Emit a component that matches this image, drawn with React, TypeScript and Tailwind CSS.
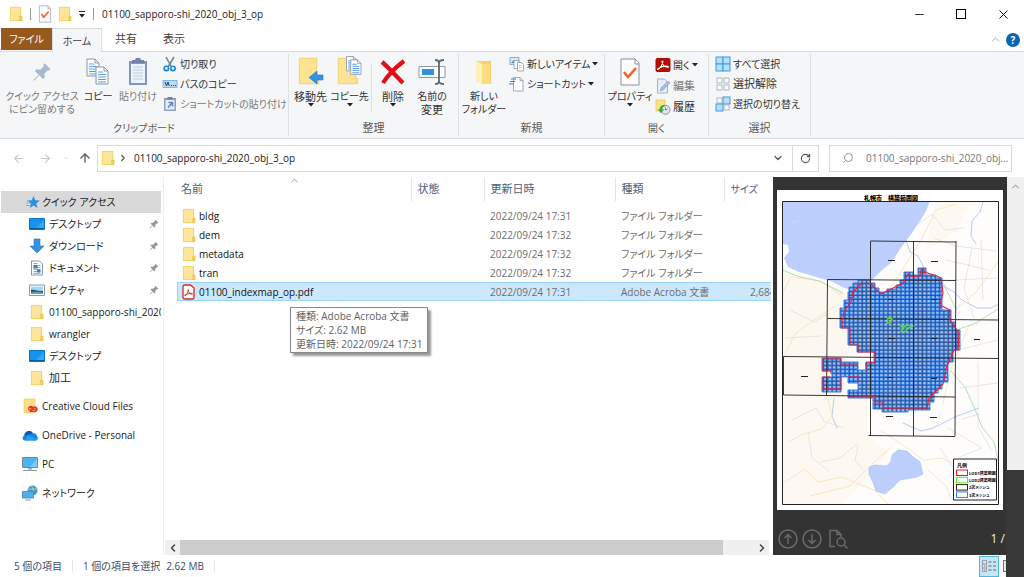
import React from "react";
import { ArrowLeft, ArrowRight, ArrowUp, ChevronDown, ChevronLeft, ChevronRight, ChevronUp, Minus, RotateCw, Search, Square, X } from "lucide-react";

type IconProps = { className?: string };

const FolderIcon = ({ className = "h-4 w-4" }: IconProps) => (
  <svg viewBox="0 0 16 16" className={className} aria-hidden="true">
    <path d="M2 1h11v9h1.200v5H2z" fill="#fbe08a" />
    <path d="M2.400 1.400h10.200v9H12v4.200H2.400z" fill="#fde59a" stroke="#f0cb5c" strokeWidth=".7" />
    <path d="M12 10.200h1.800v4.400H12z" fill="#fbe08a" stroke="#e6b935" strokeWidth=".8" />
  </svg>
);

const BigFolder = () => (
  <>
    <path d="M4 2h18v20h2v6H4z" fill="#fbdd83" />
    <path d="M4 2h17v26H4z" fill="#fde394" />
    <path d="M4.300 2.300h17.400v20h2v5.400H4.300z" fill="none" stroke="#efcd69" strokeWidth=".7" />
  </>
);

const Sheet = ({ x, y }: { x: number; y: number }) => (
  <g transform={`translate(${x} ${y})`}>
    <path d="M0 0h8l4 4v13H0z" fill="#fff" stroke="#8b97a8" />
    <path d="M8 0v4h4" fill="none" stroke="#8b97a8" />
    <path d="M2 5h5M2 7.500h8M2 10h8M2 12.500h8M2 15h8" stroke="#5b9fe6" strokeWidth="1.200" />
  </g>
);

const CopyIcon = () => (
  <svg viewBox="0 0 32 32" className="h-8 w-8"><Sheet x={5} y={3} /><Sheet x={14} y={11} /></svg>
);

const PushPin = ({ className = "h-3 w-3 text-[#8f9aa5]" }: IconProps) => (
  <svg viewBox="0 0 16 16" className={className} aria-hidden="true">
    <path d="M10 1l5 5-1.600.800-.8-.2-2.700 2.800.3 3-1.400 1.200-3-3L1.600 15 1 14.400l4.300-4.300-3-3 1.300-1.300 3 .3 2.800-2.800-.2-.9z" fill="currentColor" />
  </svg>
);

const PasteIcon = () => (
  <svg viewBox="0 0 32 32" className="h-8 w-8">
    <path d="M7 5h18v24H7z" fill="#8097bd" />
    <path d="M9 8h14v19H9z" fill="#edf2f9" />
    <path d="M10 7V4h3l1-2h4l1 2h3v3z" fill="#7186a8" />
    <path d="M11 11h10M11 14h10M11 17h10M11 20h10M11 23h10" stroke="#bdcde5" />
  </svg>
);

const ScissorsIcon = () => (
  <svg viewBox="0 0 16 16" className="h-4 w-4" fill="none">
    <path d="M4 1l5.500 10M12 1L6 11" stroke="#71808f" strokeWidth="1.500" />
    <circle cx="4.400" cy="12.400" r="2.200" stroke="#1686d0" strokeWidth="1.600" />
    <circle cx="11" cy="12.400" r="2.200" stroke="#1686d0" strokeWidth="1.600" />
  </svg>
);

const PathIcon = () => (
  <svg viewBox="0 0 16 16" className="h-4 w-4">
    <path d="M1 4.500h14v7H1z" fill="#b9dcf4" stroke="#6ba9d6" strokeWidth=".8" />
    <path d="M3 6l1.500 4L6 6l1.300 4M9 9.500h1M11 9.500h1M13 9.500h1" fill="none" stroke="#245" strokeWidth="1" />
  </svg>
);

const PasteShortcutIcon = () => (
  <svg viewBox="0 0 16 16" className="h-4 w-4">
    <path d="M2 2h12v13H2z" fill="#8fa2bd" /><path d="M3.500 4h9v9.500h-9z" fill="#e8eef7" /><path d="M5.500 1h5v2.500h-5z" fill="#74869f" />
    <path d="M6.500 6.500h4V10.500M10.300 6.800L6 11.500" fill="none" stroke="#6485b9" strokeWidth="1.500" />
  </svg>
);

const MoveToIcon = () => (
  <svg viewBox="0 0 32 32" className="h-8 w-8"><BigFolder /><path d="M28 19v5h-6v4l-8-6.500 8-6.500v4z" fill="#2f92e3" stroke="#1f7fce" strokeWidth=".6" /></svg>
);

const CopyToIcon = () => (
  <svg viewBox="0 0 32 32" className="h-8 w-8"><BigFolder /><g transform="translate(12.500 .5) scale(.85)"><Sheet x={0} y={0} /><Sheet x={5} y={4} /></g></svg>
);

const DeleteIcon = () => (
  <svg viewBox="0 0 32 32" className="h-8 w-8"><path d="M5 6c5 4 13 13 21 21M27 5C19 11 11 19 6 27" fill="none" stroke="#e10f16" strokeWidth="4.200" /></svg>
);

const RenameIcon = () => (
  <svg viewBox="0 0 32 32" className="h-8 w-8" fill="none">
    <path d="M3 10.500h26v11H3z" fill="#fff" stroke="#8a97a5" /><path d="M6 13h12v6H6z" fill="#2f92e3" />
    <path d="M19 4c3 0 4 1 4 3v18c0 2-1 3-4 3M28 4c-3 0-5 1-5 3v18c0 2 2 3 5 3" stroke="#5f6b76" strokeWidth="1.800" />
  </svg>
);

const NewFolderIcon = () => (
  <svg viewBox="0 0 32 32" className="h-8 w-8">
    <path d="M8 5h15v21H8z" fill="#f6d06a" /><path d="M8 5l6 3v20l-6-3z" fill="#fff0b8" /><path d="M14 8h8v18h2l-1 2h-9z" fill="#fbdc83" />
  </svg>
);

const NewItemIcon = () => (
  <svg viewBox="0 0 16 16" className="h-4 w-4">
    <path d="M1 1.500h9v7H1z" fill="#cfe8fb" stroke="#68a5d2" strokeWidth=".8" /><path d="M2 7l3-3 3 3z" fill="#3e89c5" />
    <path d="M5 4.500h5v8H5z" fill="#fff" stroke="#8a97a5" strokeWidth=".8" /><path d="M8.500 6.500h4l2 2v6.500h-6z" fill="#fff" stroke="#8a97a5" strokeWidth=".8" />
    <path d="M10 9.500h3M10 11.500h3" stroke="#b3bdc8" strokeWidth=".8" />
  </svg>
);

const ShortcutIcon = () => (
  <svg viewBox="0 0 16 16" className="h-4 w-4">
    <path d="M4.500 1.500h6.500l3 3v10.500H4.500z" fill="#fff" stroke="#8a97a5" strokeWidth=".8" /><path d="M11 1.500v3h3" fill="none" stroke="#8a97a5" strokeWidth=".8" />
    <path d="M2 3h5M1 5.500h5M0 8h5" stroke="#2f86cc" strokeWidth="1.200" />
  </svg>
);

const CheckSheet = ({ className = "h-8 w-8" }: IconProps) => (
  <svg viewBox="0 0 32 32" className={className}>
    <path d="M7 3h14l4 4v22H7z" fill="#fdfdfd" stroke="#8b949e" /><path d="M21 3v5h4" fill="none" stroke="#8b949e" />
    <path d="M10 16l4 5 8-9" fill="none" stroke="#f2652a" strokeWidth="2.600" />
  </svg>
);

const AcrobatGlyph = ({ color }: { color: string }) => (
  <path d="M3 12.300c2-.8 4-4 4.800-7.300.3-1.300-.9-1.300-.7 0 .4 2.700 2.800 5 5.400 5.300 1.300.1 1.100-1 0-1.100C9.600 9 6 9.900 3.300 11.400c-1.100.6-.9 1.200-.3.900z" fill="none" stroke={color} strokeWidth="1.100" />
);

const AcrobatIcon = () => (
  <svg viewBox="0 0 16 16" className="h-4 w-4"><rect x=".5" y="1" width="15" height="14" rx="2" fill="#b30b00" /><AcrobatGlyph color="#fff" /></svg>
);

const PdfIcon = () => (
  <svg viewBox="0 0 16 16" className="h-4 w-4">
    <path d="M4 1h5.500L13 4v9c0 1.300-.7 2-2 2H4c-1.300 0-2-.7-2-2V3c0-1.300.7-2 2-2z" fill="#fff" stroke="#e1251b" strokeWidth="1.300" />
    <g transform="translate(1.600 2.500) scale(.75)"><AcrobatGlyph color="#d9150c" /></g>
  </svg>
);

const EditIcon = () => (
  <svg viewBox="0 0 16 16" className="h-4 w-4">
    <path d="M2.500 1h7l3 3v11h-10z" fill="#e6eef9" stroke="#9db2d1" /><path d="M5 13l1-3 7-7 2 2-7 7z" fill="#a9bedd" stroke="#7f9ac2" strokeWidth=".6" />
  </svg>
);

const HistoryIcon = () => (
  <svg viewBox="0 0 16 16" className="h-4 w-4">
    <path d="M1 1h9v11H1z" fill="#fce08a" stroke="#e9c04a" strokeWidth=".7" /><circle cx="10.500" cy="10.800" r="4.500" fill="#e2e6e8" stroke="#89949b" />
    <path d="M10.500 8.500V11l2-1" fill="none" stroke="#666" strokeWidth=".8" /><path d="M9.500 6C6 6 4.600 8 4.600 10.300H2.800l3.200 4 3.200-4H7.300c0-1.600 1-2.700 2.800-3z" fill="#2dad3b" />
  </svg>
);

const GridSelect = ({ on }: { on: boolean[] }) => (
  <svg viewBox="0 0 16 16" className="h-4 w-4">
    {on.map((active, i) => {
      const x = i % 2 ? 8 : 1;
      const y = i > 1 ? 8 : 1;
      return active
        ? <rect key={i} x={x} y={y} width="7" height="7" fill="#b5defa" stroke="#3c9be0" strokeWidth="1" />
        : <rect key={i} x={x + 1} y={y + 1} width="5" height="5" fill="#fafafa" stroke="#adb3b8" strokeWidth=".9" />;
    })}
  </svg>
);

const StarIcon = () => (
  <svg viewBox="0 0 16 16" className="h-4 w-4"><path d="M8.500 2l1.800 4.200 4.500.3-3.500 3 1.200 4.500-3.900-2.400L4.800 14l1-4.500L2.500 6.600l4.300-.4z" fill="#2e8fdc" /><path d="M1.500 9h3M1 11.500h3.500M2 6.800h2" stroke="#68b3ef" strokeWidth="1" /></svg>
);
const DesktopIcon = () => (
  <svg viewBox="0 0 16 16" className="h-4 w-4"><path d="M.5 2.500h15v11H.5z" fill="#1392ef" stroke="#0873c4" /><path d="M7 12l8-8v8z" fill="#36a7fa" /><path d="M1 12.500h14" stroke="#0b5f9f" /></svg>
);
const DownloadIcon = () => (
  <svg viewBox="0 0 16 16" className="h-4 w-4"><path d="M5 1h6v7h4l-7 7-7-7h4z" fill="#3690dd" stroke="#2077c2" strokeWidth=".6" /></svg>
);
const DocumentIcon = () => (
  <svg viewBox="0 0 16 16" className="h-4 w-4"><path d="M2.500 1h8l3 3v11h-11z" fill="#fff" stroke="#8c98a3" /><path d="M4.500 3.500h4M4.500 5.500h7M4.500 7.500h7M4.500 9.500h7M4.500 11.500h7M4.500 13.300h7" stroke="#6db3e2" /><path d="M4.500 5h4v3.500h-4zM8 9.500h3.500v3H8z" fill="#3784bd" /></svg>
);
const PictureIcon = () => (
  <svg viewBox="0 0 16 16" className="h-4 w-4"><path d="M.5 3h15v10.500H.5z" fill="#fff" stroke="#8a99a6" /><path d="M2 4.500h12V12H2z" fill="#a9d7f3" /><path d="M2 7.500c4 0 7 2 12 1.500v3H2z" fill="#275f78" /><path d="M2 10.500c4-1 8-1 12 0V12H2z" fill="#669cb5" /></svg>
);
const CreativeIcon = () => (
  <svg viewBox="0 0 16 16" className="h-4 w-4"><path d="M2 1h11v14H2z" fill="#fbdd83" stroke="#efc75b" strokeWidth=".6" /><path d="M6 11.500a3 3 0 015-2.800 2.900 2.900 0 013 5.300H8a2.700 2.700 0 01-2-2.500z" fill="#df3220" /><path d="M8 12.800a1.300 1.300 0 110-2.600c1.500 0 2 2.600 3.700 2.600a1.400 1.400 0 100-2.800" fill="none" stroke="#fbd5bd" strokeWidth=".7" /></svg>
);
const CloudIcon = () => (
  <svg viewBox="0 0 16 16" className="h-4 w-4"><path d="M3 13.500C.3 13.500-.4 9.500 2.400 8.600 2.600 4.200 8.600 2 10.800 6.200c3.700-.3 4 2.300 4 2.800 1.800 1.300 1 4.500-1.300 4.500z" fill="#1687d9" /><path d="M2.400 8.600C2.600 4.200 8.600 2 10.800 6.200c-2 .2-3 1-4.300 2-1-.4-2.700-.4-4.100.4z" fill="#0b5cac" /><path d="M6 8l9.500 4c-.4 1-1 1.500-2 1.500H3z" fill="#2aa0ec" /></svg>
);
const PcIcon = () => (
  <svg viewBox="0 0 16 16" className="h-4 w-4"><path d="M.5 1.500h15v10H.5z" fill="#4db4f3" stroke="#77868f" /><path d="M8 11l7-8v8z" fill="#7fcbf8" /><path d="M6 12h4v1.500H6z" fill="#9aa8b0" /><path d="M1 14.500h14" stroke="#8b9aa3" /></svg>
);
const NetworkIcon = () => (
  <svg viewBox="0 0 16 16" className="h-4 w-4"><circle cx="10.500" cy="5.500" r="5" fill="#4f94b7" /><path d="M9 1c3 1 3 8 0 9M6 4h9" stroke="#b8dcea" fill="none" strokeWidth=".8" /><path d="M.5 6.500h11v6.500H.5z" fill="#49b3f2" stroke="#4288b5" strokeWidth=".8" /><path d="M3.500 15h5" stroke="#7c94a2" /></svg>
);

const Caret = () => (
  <svg viewBox="0 0 6 4" className="h-1 w-1.5 shrink-0" aria-hidden="true"><path d="M0 0h6L3 3.500z" fill="#222" /></svg>
);

// Kanji-only labels are set one pixel larger than labels with kana or Latin letters.
const labelSize = (label: string) => (/^[一-龥]+$/.test(label) ? "text-[11px]" : "text-[10px]");

type BigProps = { icon: React.ReactNode; lines: string[]; width: string; caret?: boolean; muted?: boolean };

const BigButton = ({ icon, lines, width, caret, muted }: BigProps) => (
  <button className={`flex h-[60px] shrink-0 flex-col items-center whitespace-nowrap leading-[13px] ${width} ${muted ? "text-[#7b7b7b]" : "text-[#333]"}`}>
    {icon}
    <span className="mt-0.5 text-center">{lines.map((line) => <span key={line} className={`block ${labelSize(line)}`}>{line}</span>)}</span>
    {caret && <Caret />}
  </button>
);

const SmallButton = ({ icon, label, caret, muted }: { icon: React.ReactNode; label: string; caret?: boolean; muted?: boolean }) => (
  <button className={`flex h-5 items-center gap-0.5 whitespace-nowrap leading-4 ${labelSize(label)} ${muted ? "text-[#7b7b7b]" : "text-[#333]"}`}>
    {icon}<span>{label}</span>{caret && <Caret />}
  </button>
);

const Group = ({ title, width, children }: { title: string; width: string; children: React.ReactNode }) => (
  <section aria-label={title} className={`my-0.5 flex shrink-0 flex-col border-r border-[#dfe2e5] ${width}`}>
    <div className="flex">{children}</div>
    <div className={`mt-auto text-center leading-4 text-[#5a5a5a] ${labelSize(title)}`}>{title}</div>
  </section>
);

const quickItems = [
  { label: "デスクトップ", icon: <DesktopIcon />, pinned: true },
  { label: "ダウンロード", icon: <DownloadIcon />, pinned: true },
  { label: "ドキュメント", icon: <DocumentIcon />, pinned: true },
  { label: "ピクチャ", icon: <PictureIcon />, pinned: true },
  { label: "01100_sapporo-shi_2020_obj_3_op", icon: <FolderIcon />, pinned: false },
  { label: "wrangler", icon: <FolderIcon />, pinned: false },
  { label: "デスクトップ", icon: <DesktopIcon />, pinned: false },
  { label: "加工", icon: <FolderIcon />, pinned: false },
];

const rootItems = [
  { label: "Creative Cloud Files", icon: <CreativeIcon /> },
  { label: "OneDrive - Personal", icon: <CloudIcon /> },
  { label: "PC", icon: <PcIcon /> },
  { label: "ネットワーク", icon: <NetworkIcon /> },
];

const files = [
  { name: "bldg", date: "2022/09/24 17:31", type: "ファイル フォルダー", size: "", selected: false },
  { name: "dem", date: "2022/09/24 17:32", type: "ファイル フォルダー", size: "", selected: false },
  { name: "metadata", date: "2022/09/24 17:32", type: "ファイル フォルダー", size: "", selected: false },
  { name: "tran", date: "2022/09/24 17:32", type: "ファイル フォルダー", size: "", selected: false },
  { name: "01100_indexmap_op.pdf", date: "2022/09/24 17:31", type: "Adobe Acroba 文書", size: "2,684 KB", selected: true },
];

const legend = [
  { color: "#f01820", label: "LOD1建築範囲" },
  { color: "#5bea1c", label: "LOD2建築範囲" },
  { color: "#222", label: "2次メッシュ" },
  { color: "#2f7df0", label: "3次メッシュ" },
];

const meshShape = "M858 280H870V283H875V288H879V292H887V289H896V285H900V280H904V272H913V275H918V268H926V275H936V278H942V310H951V322H955V330H960V350H953V362H948V382H942V389H938V393H934V402H930V410H908V412H882V409H873V398H848V390H858V383H848V377H841V392H822V377H832V371H822V358H841V362H858V370H866V362H874V352H857V345H848V328H840V308H844V300H848V292H849V287H853V283H858Z";

const MapPage = () => (
  <svg viewBox="777 190 226 320" className="block w-full bg-white" role="img" aria-label="札幌市 構築範囲図">
    <defs>
      <pattern id="mesh" x="870.500" y="279.500" width="4.300" height="3.900" patternUnits="userSpaceOnUse">
        <rect width="4.300" height="3.900" fill="#3f87ee" />
        <rect x="1.200" y="1.200" width="2.200" height="1.700" fill="#b3cbf2" />
        <path d="M0 .3h4.300M.3 0v3.900" stroke="#22365c" strokeWidth=".65" />
      </pattern>
      <clipPath id="frame"><rect x="782.500" y="201.500" width="216" height="303" /></clipPath>
    </defs>
    <text x="891" y="200" textAnchor="middle" fontSize="6" fontWeight="900" fill="#000" xmlSpace="preserve">札幌市　構築範囲図</text>
    <g clipPath="url(#frame)">
      <rect x="782" y="201" width="218" height="304" fill="#fefdfb" />
      <path d="M782 270l14 5 30 8 20 10 12-8-18 130-58-5z" fill="#fdf8ef" />
      <path d="M782 395l86 2v38l20 18-46 52h-60zM935 202h35l-15 30-30 20z" fill="#fdf9f2" />
      <path d="M782 201h148l-4 10-6 10-11 16-9 12-8 13-10 8-8 8-11 10-10 3-11-4-9-5-20-6-14-4-11-5-4-9 5-6-1-7-5-1-10 1z" fill="#bdd0fd" />
      <path d="M869 467l6-2 12 1 4-5 1-6 6-5 9 1 5 5 8 6 3 12-6 3-17 3-7 7-8 7-9-3-3-9-4-8z" fill="#bdd0fd" stroke="#9bb2e5" strokeWidth=".5" />
      <g fill="none" strokeLinejoin="round" strokeLinecap="round">
        <g stroke="#a7bdf0" strokeWidth="1"><path d="M983 202l-3 10-8 9-1 15 5 8M906 240l4 12 8 4 6 12 12 14 18 10 8 8 15 8h14l20-10M834 398l-2 18 5 12M903 423l18 8 12-3 24-12 22-8" strokeWidth=".8" /></g>
        <g stroke="#f8e5c2" strokeWidth="1"><path d="M783 292l8-15 30 4 20 14M887 293l12-18 22-35 15-30 20-6M782 361l13-27 20-15 22-14M783 483l22-14 13 13 24-5 32 13 14 14M788 442l13-7 20-6 11-12-4-18M880 430l12 8 18 12 14 10 18-2 14 8M956 310l20-18 22-30M943 403l8-34 18-44M810 496l40-10 20-20 20-18" /></g>
        <g stroke="#a8dab4" strokeWidth=".9"><path d="M783 270l14 6 22 5 24 12M943 283l13 26M951 371l14 16 9 20 8 20 12 15 5 23M956 330l20-7 22-14" /></g>
        <g stroke="#dddcdf" strokeWidth=".7"><path d="M917 225l15-11 13 16 19-2M934 238l22 8 40 5M946 260l43 10M954 280l44-2M972 248l-8 40 10 30M981 240l2 60M958 350l40-10M960 388l38-5M978 362v64l13 24M798 220l-6 3M790 310l24 12 14-8M785 338l36-2M792 420l24-12 8 13 19 7M808 432l4 26 17 13M858 443l-18 15-20 4M858 446l-3 14 8 10M948 428l34 20-22 9M928 470l18 16 5 13M940 448l10 15M962 419l18-5" /></g>
      </g>
      <path d={meshShape} fill="url(#mesh)" stroke="#3b80e8" strokeWidth="1" />
      <g fill="none" stroke="#222" strokeWidth=".9">
        <path d="M870.500 241v195M913.500 241v195M956 241l-1 195M870.500 241l85.500 1M827.500 279.500l128.500 1M827.500 279.500l-1 116M827.500 318.500l171 1.500M998.500 320v38M783.500 356.500l215 2M783.500 356.500v38.500l172 2M868.500 435.500l86.500 1" />
      </g>
      <path d="M870 284l-3-1-6 1-9 9 1 4-4 1 3 2-8 12-2 10v6h8v17h8v7h17v11h-9v6M858 364h-17v-5h-18v12h8v3M823 389v-12h7M841 377v12h-18M848 377h10v5M848 396h27v6h8v6h44l2-10 14-14 4-18 7-16h4l1-17-9-13v-10l-8-4-2-1 3-12-2-15-4-2-13-4M922 275l-9 2-5-3-5 9-10 5-12 6-11-11M920 275l1-5 3-1v5" fill="none" stroke="#ed1b34" strokeWidth="1.100" />
      <path d="M887 324l1-6 4 1-1 3-3 1M900 325l5 2 1-2 7 1-6 3-2 3-4-1 2-3z" fill="none" stroke="#55e51f" strokeWidth="1.300" />
      <g fill="#222">
        <path d="M888 260h7v1h-7zM931 261h7v1h-7zM888 299h6v1h-6zM931 299h6v1h-6zM888 338h7v1h-7zM931 338h6v1h-6zM974 339h6v1h-6zM801 376h7v1h-7zM887 377h6v1h-6zM931 378h6v1h-6zM886 416h7v1h-7zM930 417h7v1h-7z" />
      </g>
      <path d="M953.500 459h43v41h-43z" fill="#fff" stroke="#222" />
    </g>
    <path d="M782.500 201.500h216v303h-216z" fill="none" stroke="#222" />
    <text x="957" y="467" fontSize="5" fontWeight="700">凡例</text>
    {legend.map((item, i) => (
      <g key={item.label}>
        <rect x="956.500" y={470 + i * 7.3} width="11" height="5.500" fill="#fff" stroke={item.color} />
        <text x="969" y={474.8 + i * 7.3} fontSize="4" fontWeight="700">{item.label}</text>
      </g>
    ))}
  </svg>
);

export default function App() {
  return (
    <div className="relative flex min-h-screen flex-col overflow-hidden bg-white font-['Open_Sans','Noto_Sans_CJK_JP',sans-serif] text-[11px] leading-4 text-[#222] [font-feature-settings:'palt']">
      <header className="flex h-7 items-center pl-2">
        <FolderIcon />
        <span className="mr-1 ml-1.5 h-3 w-px bg-[#999]" />
        <button aria-label="プロパティ"><CheckSheet className="h-5 w-5" /></button>
        <button aria-label="新しいフォルダー" className="ml-0.5"><FolderIcon /></button>
        <button aria-label="クイック アクセス ツール バーのカスタマイズ" className="ml-1.5 flex flex-col items-center gap-0.5"><span className="h-px w-1.5 bg-[#222]" /><Caret /></button>
        <span className="mx-2 h-3 w-px bg-[#999]" />
        <h1 className="text-[10px]">01100_sapporo-shi_2020_obj_3_op</h1>
        <div className="ml-auto flex text-black">
          <button aria-label="最小化" className="flex w-[42px] items-center justify-center"><Minus size={13} strokeWidth={1.5} /></button>
          <button aria-label="最大化" className="flex w-[42px] items-center justify-center"><span className="h-2.5 w-2.5 border border-black" /></button>
          <button aria-label="閉じる" className="flex w-[42px] items-center justify-center"><X size={15} strokeWidth={1.5} /></button>
        </div>
      </header>

      <nav aria-label="リボン タブ" className="flex h-6 shrink-0 border-b border-[#d9dcdf] pl-px text-[#444]">
        <button className="h-[22px] w-[51px] bg-[#98591f] text-[10px] text-white">ファイル</button>
        <button className="-mb-px h-6 w-[50px] border border-b-0 border-[#d9dcdf] bg-[#f5f6f7] text-[10px]">ホーム</button>
        <button className="h-[22px] w-12">共有</button>
        <button className="h-[22px] w-12">表示</button>
        <div className="ml-auto flex items-center gap-1 pr-1">
          <button aria-label="リボンの最小化" className="text-[#999]"><ChevronUp size={13} strokeWidth={1.5} /></button>
          <button aria-label="ヘルプ" className="h-3.5 w-3.5 rounded-full bg-[#0863b9] text-[10px] leading-3.5 font-bold text-white">?</button>
        </div>
      </nav>

      <div role="toolbar" aria-label="ホーム" className="flex h-[87px] shrink-0 border-b border-[#dadcdf] bg-[#f5f6f7]">
        <Group title="クリップボード" width="w-[289px]">
          <div className="flex pt-0.5 pl-1">
            <BigButton width="w-[76px]" muted icon={<span className="flex h-8 w-8 items-center justify-center"><PushPin className="h-5 w-5 text-[#a9b8cc]" /></span>} lines={["クイック アクセス", "にピン留めする"]} />
            <BigButton width="w-9" icon={<CopyIcon />} lines={["コピー"]} />
            <BigButton width="w-11" muted icon={<PasteIcon />} lines={["貼り付け"]} />
          </div>
          <div className="ml-0.5 flex flex-col">
            <SmallButton icon={<ScissorsIcon />} label="切り取り" />
            <SmallButton icon={<PathIcon />} label="パスのコピー" />
            <SmallButton muted icon={<PasteShortcutIcon />} label="ショートカットの貼り付け" />
          </div>
        </Group>
        <Group title="整理" width="w-[170px]">
          <div className="flex pt-0.5 pl-0.5">
            <BigButton width="w-[39px]" icon={<MoveToIcon />} lines={["移動先"]} caret />
            <BigButton width="w-[39px]" icon={<CopyToIcon />} lines={["コピー先"]} caret />
            <span className="mx-0.5 mt-2 h-12 w-px bg-[#dfe2e5]" />
            <BigButton width="w-[38px]" icon={<DeleteIcon />} lines={["削除"]} caret />
            <BigButton width="w-[40px]" icon={<RenameIcon />} lines={["名前の", "変更"]} />
          </div>
        </Group>
        <Group title="新規" width="w-[146px]">
          <div className="flex pt-0.5 pl-1"><BigButton width="w-[42px]" icon={<NewFolderIcon />} lines={["新しい", "フォルダー"]} /></div>
          <div className="ml-1 flex flex-col">
            <SmallButton icon={<NewItemIcon />} label="新しいアイテム" caret />
            <SmallButton icon={<ShortcutIcon />} label="ショートカット" caret />
          </div>
        </Group>
        <Group title="開く" width="w-[104px]">
          <div className="flex pt-0.5 pl-1"><BigButton width="w-[42px]" icon={<CheckSheet />} lines={["プロパティ"]} caret /></div>
          <div className="ml-1 flex flex-col gap-px pt-px">
            <SmallButton icon={<AcrobatIcon />} label="開く" caret />
            <SmallButton muted icon={<EditIcon />} label="編集" />
            <SmallButton icon={<HistoryIcon />} label="履歴" />
          </div>
        </Group>
        <Group title="選択" width="w-[102px]">
          <div className="flex flex-col pl-1.5">
            <SmallButton icon={<GridSelect on={[true, true, true, true]} />} label="すべて選択" />
            <SmallButton icon={<GridSelect on={[false, false, false, false]} />} label="選択解除" />
            <SmallButton icon={<GridSelect on={[false, true, true, false]} />} label="選択の切り替え" />
          </div>
        </Group>
      </div>

      <div className="flex h-[38px] shrink-0 items-center pr-3">
        <div className="flex w-[97px] items-center pl-3 text-[#c8c8c8]">
          <button aria-label="戻る"><ArrowLeft size={13} /></button>
          <button aria-label="進む" className="ml-3.5"><ArrowRight size={13} /></button>
          <button aria-label="最近の場所" className="ml-2.5"><ChevronDown size={8} /></button>
          <button aria-label="上へ" className="ml-2 text-[#666]"><ArrowUp size={14} strokeWidth={2.5} /></button>
        </div>
        <div className="flex h-[27px] min-w-0 flex-1 items-center border border-[#d9d9d9] pl-0.5">
          <FolderIcon />
          <ChevronRight size={10} strokeWidth={3} className="ml-0.5 text-[#555]" />
          <a href="#folder" className="ml-1.5 text-[10px]">01100_sapporo-shi_2020_obj_3_op</a>
          <button aria-label="以前の場所" className="mr-2 ml-auto text-[#555]"><ChevronDown size={12} strokeWidth={2.5} /></button>
          <button aria-label="最新の情報に更新" className="flex h-full w-[26px] items-center justify-center border-l border-[#d9d9d9] text-[#555]"><RotateCw size={11} strokeWidth={2.5} /></button>
        </div>
        <label className="ml-2.5 flex h-[27px] w-[183px] items-center border border-[#d9d9d9] pl-3 text-[#777]">
          <Search size={12} strokeWidth={1.5} className="shrink-0 -scale-x-100" />
          <input type="text" role="searchbox" aria-label="検索" placeholder="01100_sapporo-shi_2020_obj_3_opの検索" className="ml-3 min-w-0 flex-1 text-[10px] text-ellipsis outline-none placeholder:text-[#777]" />
        </label>
      </div>

      <main className="flex flex-1">
        <nav aria-label="ナビゲーション" className="w-[164px] shrink-0 border-r border-[#eee] pt-[14px] pr-0.5 pl-px">
          <a href="#quick" className="flex h-[22px] items-center bg-[#d9d9d9] pl-6 text-[10px]"><StarIcon /><span className="ml-px">クイック アクセス</span></a>
          <ul>
            {quickItems.map((item, i) => (
              <li key={i}>
                <a href="#item" className="flex h-[22px] items-center gap-1 overflow-hidden pl-7 whitespace-nowrap">
                  <span className="shrink-0">{item.icon}</span>
                  <span className={labelSize(item.label)}>{item.label}</span>
                  {item.pinned && <PushPin className="mr-0.5 ml-auto h-2.5 w-2.5 text-[#8f9aa5]" />}
                </a>
              </li>
            ))}
          </ul>
          <ul className="mt-0.5">
            {rootItems.map((item) => (
              <li key={item.label}><a href="#root-item" className="flex h-[29px] items-center gap-1 pl-[21px] text-[10px]">{item.icon}<span>{item.label}</span></a></li>
            ))}
          </ul>
        </nav>

        <section aria-label="ファイル一覧" className="relative flex min-w-0 flex-1 flex-col">
          <div className="mr-0.5 overflow-hidden pl-[13px]">
            <table className="w-[620px] table-fixed border-collapse text-left">
              <colgroup><col className="w-[234px]" /><col className="w-[73px]" /><col className="w-[131px]" /><col className="w-[109px]" /><col className="w-[73px]" /></colgroup>
              <thead className="text-[#4c607a]">
                <tr className="h-6">
                  <th className="relative border-r border-[#e5e5e5] pl-1 font-normal">名前<ChevronUp size={11} strokeWidth={1.5} className="absolute -top-0.5 left-28 text-[#666]" /></th>
                  <th className="border-r border-[#e5e5e5] pl-1.5 font-normal">状態</th>
                  <th className="border-r border-[#e5e5e5] pl-1.5 font-normal">更新日時</th>
                  <th className="border-r border-[#e5e5e5] pl-1.5 font-normal">種類</th>
                  <th className="pl-1.5 text-[10px] font-normal">サイズ</th>
                </tr>
              </thead>
              <tbody className="text-[10px] text-[#6d6d6d]">
                <tr aria-hidden="true" className="h-[5px]" />
                {files.map((file) => (
                  <tr key={file.name} className={`h-[19px] ${file.selected ? "bg-[#cce8ff] outline -outline-offset-1 outline-[#99d1ff]" : ""}`}>
                    <td className="pl-1 text-[#111]"><span className="flex items-center gap-0.5">{file.selected ? <PdfIcon /> : <FolderIcon />}<span>{file.name}</span></span></td>
                    <td />
                    <td className="pl-1.5">{file.date}</td>
                    <td className="pl-1.5 whitespace-nowrap">{file.type}</td>
                    <td className="pl-[26px] whitespace-nowrap">{file.size}</td>
                  </tr>
                ))}
              </tbody>
            </table>
          </div>
          <div role="tooltip" className="absolute top-[130px] left-[126px] border border-[#888] bg-white px-[5px] py-px text-[10px] leading-[14px] whitespace-nowrap text-[#5f5f5f] shadow-[3px_3px_2px_#0006]">
            <p>種類: Adobe Acroba 文書</p>
            <p>サイズ: 2.62 MB</p>
            <p>更新日時: 2022/09/24 17:31</p>
          </div>
          <div className="mt-auto mr-1 ml-px flex h-[15px] items-center bg-[#f0f0f0] text-[#444]">
            <button aria-label="左へスクロール" className="flex w-[15px] justify-center"><ChevronLeft size={12} strokeWidth={3} /></button>
            <span className="h-full w-[543px] bg-[#cdcdcd]" />
            <button aria-label="右へスクロール" className="ml-auto flex w-[15px] justify-center"><ChevronRight size={12} strokeWidth={3} /></button>
          </div>
        </section>

        <aside aria-label="プレビュー" className="flex w-[234px] shrink-0 flex-col bg-[#333] px-1 pt-[13px]">
          <MapPage />
          <div className="mt-auto flex h-8 items-center gap-1 pl-px text-[#6a6a6a]">
            <button aria-label="前のページ" className="h-5 w-5"><svg viewBox="0 0 20 20" fill="none" stroke="currentColor" strokeWidth="1.500"><circle cx="10" cy="10" r="9" /><path d="M10 15V5.500M6.500 9L10 5.500 13.500 9" /></svg></button>
            <button aria-label="次のページ" className="h-5 w-5"><svg viewBox="0 0 20 20" fill="none" stroke="currentColor" strokeWidth="1.500"><circle cx="10" cy="10" r="9" /><path d="M10 5v9.500M6.500 11l3.500 3.500 3.500-3.500" /></svg></button>
            <button aria-label="ページ表示" className="ml-0.5 h-5 w-5"><svg viewBox="0 0 20 20" fill="none" stroke="currentColor" strokeWidth="1.500"><path d="M7 17.500H2v-16h7l4 4V8M9 1.500v4h4" /><circle cx="13" cy="13" r="4" /><path d="M16 16l3.500 3.500" /></svg></button>
            <span className="-mr-0.5 ml-auto text-xs text-[#eee]">1 /</span>
          </div>
        </aside>
        <div className="flex w-[17px] shrink-0 justify-center bg-[#f0f0f0] pt-1 text-[#aaa]"><ChevronUp size={11} strokeWidth={2.5} /></div>
      </main>

      <footer className="flex h-[22px] shrink-0 items-center pl-3.5 text-[10px] text-[#3c4a66]">
        <span>5 個の項目</span>
        <span className="mx-2.5 h-3 w-px bg-[#e5e5e5]" />
        <span>1 個の項目を選択</span><span className="ml-1.5">2.62 MB</span>
        <span className="ml-2.5 h-3 w-px bg-[#e5e5e5]" />
        <button aria-label="詳細表示" className="ml-auto flex h-[21px] w-5 items-center justify-center border border-[#4eb5dd] bg-[#c5e6f5]">
          <svg viewBox="0 0 16 14" className="h-3.5 w-4" fill="none"><path d="M1.500 1.500h4v11h-4zM1.500 5h4M1.500 9h4" stroke="#8a929a" strokeWidth=".8" /><path d="M7.500 3h3M12 3h3M7.500 7h3M12 7h3M7.500 11h3M12 11h3" stroke="#666" /><path d="M3 7h1M3 11h1" stroke="#d44" /></svg>
        </button>
        <button aria-label="大アイコン表示" className="ml-1 mr-[11px] h-3 w-2.5 border border-[#777] bg-[#dceaf3]" />
      </footer>
      <div aria-hidden="true" className="absolute right-0 bottom-0 h-[107px] w-[18px] bg-[#383838]" />
    </div>
  );
}
